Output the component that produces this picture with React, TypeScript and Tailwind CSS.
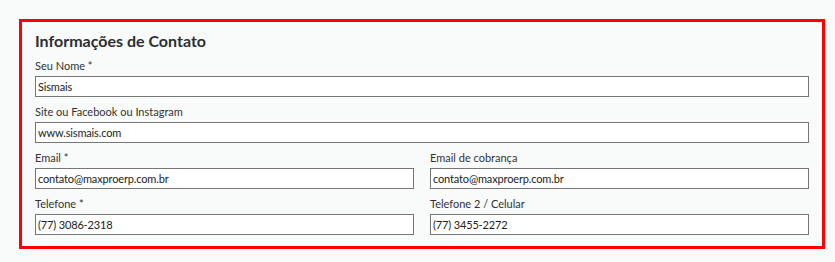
import React from "react";

const font = { fontFamily: "Lato, 'Open Sans', sans-serif" };

function Field({ label, value }: { label: string; value: string }) {
  return (
    <div className="flex flex-col">
      <label className="text-[11px] leading-[14px] text-[#333333]">{label}</label>
      <input
        readOnly
        value={value}
        className="mt-[3px] h-[21px] w-full border border-[#767676] bg-white px-[2px] text-[11px] tracking-[-0.15px] text-[#222222] outline-none"
        style={font}
      />
    </div>
  );
}

export default function App() {
  return (
    <div className="w-[835px] h-[262px] bg-[#f8f9f9] pt-[19px] pl-[19px]" style={font}>
      <div className="w-[806px] h-[230px] border-[3px] border-[#ff0000] bg-[#f9fafa] px-[13px] pt-[9px]">
        <h2 className="text-[16px] leading-[20px] font-bold text-[#2b2f33]">Informações de Contato</h2>
        <div className="mt-[8px] flex flex-col gap-[8px]">
          <Field label="Seu Nome *" value="Sismais" />
          <Field label="Site ou Facebook ou Instagram" value="www.sismais.com" />
          <div className="grid grid-cols-2 gap-x-[16px]">
            <Field label="Email *" value="contato@maxproerp.com.br" />
            <Field label="Email de cobrança" value="contato@maxproerp.com.br" />
          </div>
          <div className="grid grid-cols-2 gap-x-[16px]">
            <Field label="Telefone *" value="(77) 3086-2318" />
            <Field label="Telefone 2 / Celular" value="(77) 3455-2272" />
          </div>
        </div>
      </div>
    </div>
  );
}
